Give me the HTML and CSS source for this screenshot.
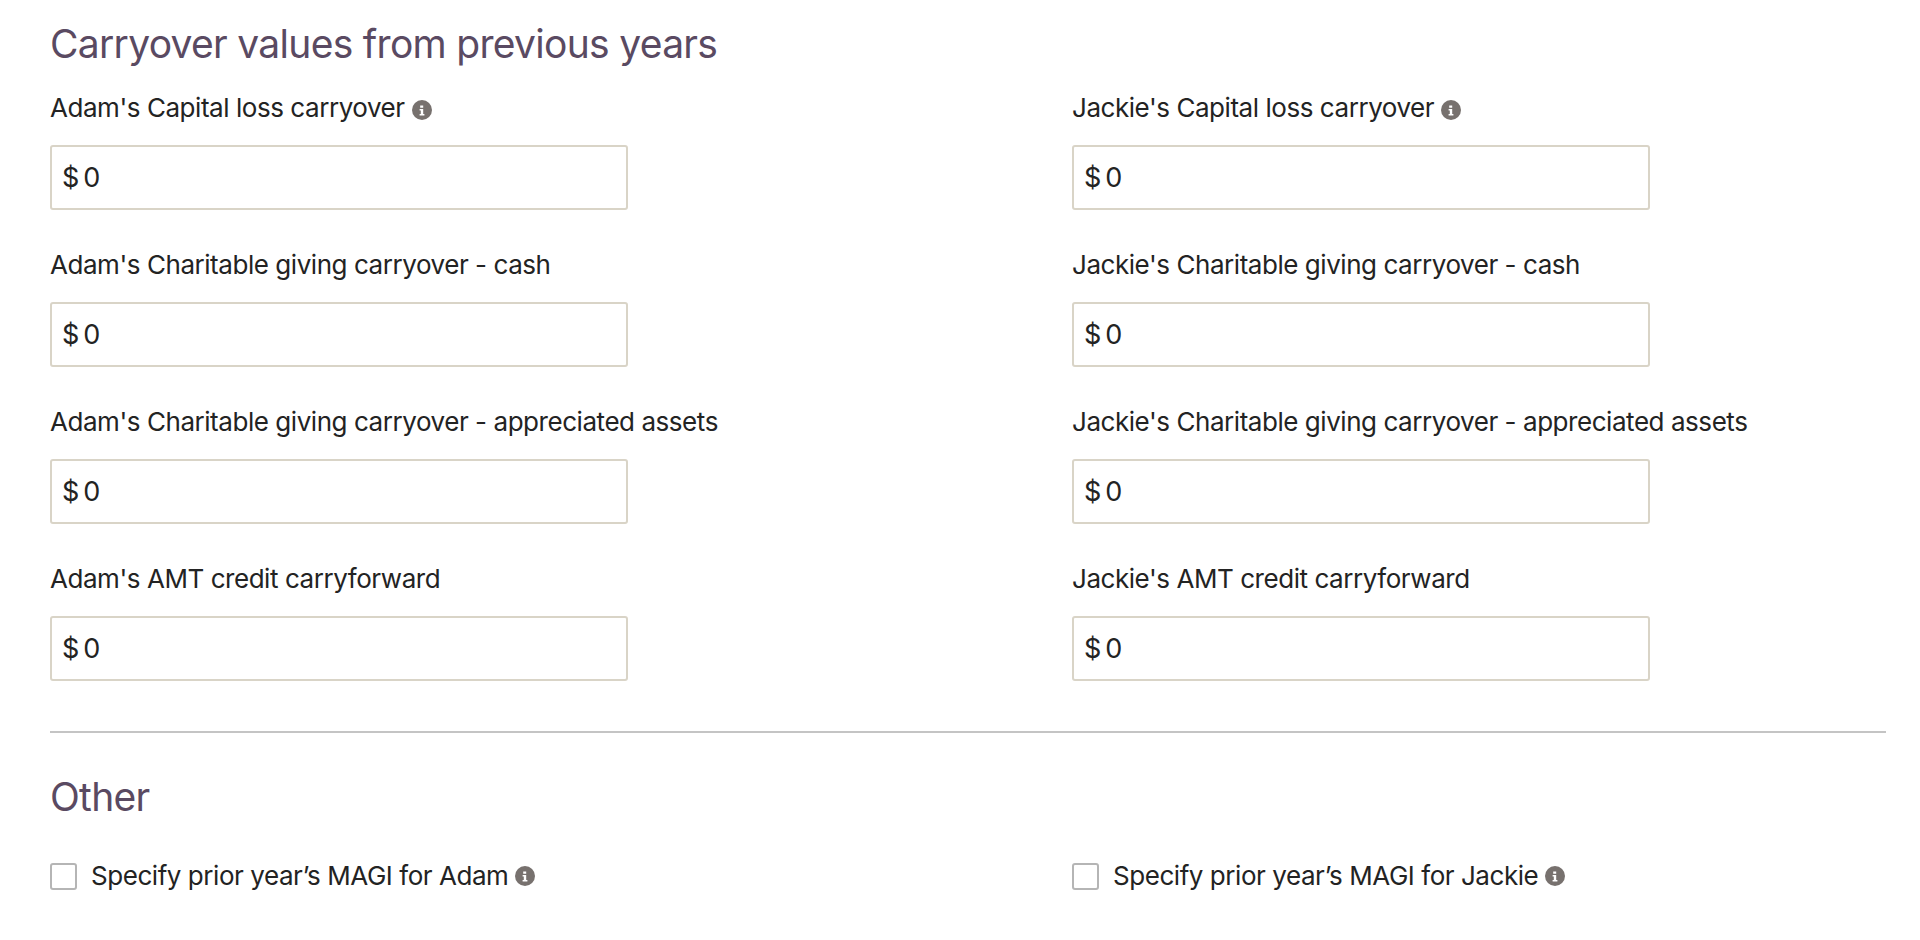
FILE: index.html
```html
<!DOCTYPE html>
<html lang="en">
<head>
<meta charset="utf-8">
<title>Carryover values</title>
<link rel="stylesheet" href="styles.css">
</head>
<body>
<svg class="sprite" width="0" height="0" aria-hidden="true"><symbol id="info" viewBox="0 0 20 20"><circle cx="10" cy="10" r="10" fill="#77716e"/><path d="M8.2 5.4h3v2.4h-3zM7.6 9h3.6v5h1.2v1.6H7.6V14h1.2v-3.4H7.6z" fill="#fff"/></symbol></svg>
<main class="page">
  <h2 class="heading">Carryover values from previous years</h2>
  <div class="grid">
    <div class="field"><label class="label">Adam's Capital loss carryover <svg class="info"><use href="#info"/></svg></label><div class="input"><span class="cur">$</span><span>0</span></div></div>
    <div class="field"><label class="label">Jackie's Capital loss carryover <svg class="info"><use href="#info"/></svg></label><div class="input"><span class="cur">$</span><span>0</span></div></div>
    <div class="field"><label class="label">Adam's Charitable giving carryover - cash</label><div class="input"><span class="cur">$</span><span>0</span></div></div>
    <div class="field"><label class="label">Jackie's Charitable giving carryover - cash</label><div class="input"><span class="cur">$</span><span>0</span></div></div>
    <div class="field"><label class="label">Adam's Charitable giving carryover - appreciated assets</label><div class="input"><span class="cur">$</span><span>0</span></div></div>
    <div class="field"><label class="label">Jackie's Charitable giving carryover - appreciated assets</label><div class="input"><span class="cur">$</span><span>0</span></div></div>
    <div class="field"><label class="label">Adam's AMT credit carryforward</label><div class="input"><span class="cur">$</span><span>0</span></div></div>
    <div class="field"><label class="label">Jackie's AMT credit carryforward</label><div class="input"><span class="cur">$</span><span>0</span></div></div>
  </div>
  <hr class="rule">
  <h2 class="heading other">Other</h2>
  <div class="checks">
    <label class="check"><span class="box"></span>Specify prior year’s MAGI for Adam <svg class="info"><use href="#info"/></svg></label>
    <label class="check"><span class="box"></span>Specify prior year’s MAGI for Jackie <svg class="info"><use href="#info"/></svg></label>
  </div>
</main>
</body>
</html>
```
FILE: styles.css
```css
* { box-sizing: border-box; }
html, body { margin: 0; background: #fff; }
body { font-family: Inter, "Liberation Sans", sans-serif; color: #232323; overflow: hidden; height: 940px; }
.sprite { position: absolute; }
.page { padding: 20px 34px 0 50px; }
.heading { margin: 0; font-size: 39px; line-height: 48px; font-weight: 400; color: #5a4a62; letter-spacing: -0.7px; }
.grid { display: grid; grid-template-columns: 1022px 1fr; row-gap: 35px; margin-top: 20px; }
.field { display: flex; flex-direction: column; }
.label { display: block; height: 57px; font-size: 26px; letter-spacing: -0.45px; line-height: 40px; }
.info { width: 20px; height: 20px; vertical-align: -3px; }
.input { width: 578px; height: 65px; border: 2px solid #d9d4c7; border-radius: 3px; display: flex; align-items: center; padding-left: 10px; font-size: 27px; }
.cur { margin-right: 4px; }
.rule { margin: 50px 0 0; border: 0; height: 2px; background: #c4c4c4; }
.other { margin-top: 40px; }
.checks { display: grid; grid-template-columns: 1022px 1fr; margin-top: 35px; }
.check { display: flex; align-items: center; font-size: 26px; letter-spacing: -0.45px; line-height: 40px; white-space: pre; }
.box { width: 27px; height: 27px; border: 2px solid #b5b5b5; border-radius: 3px; margin-right: 14px; background: #fff; }
```
